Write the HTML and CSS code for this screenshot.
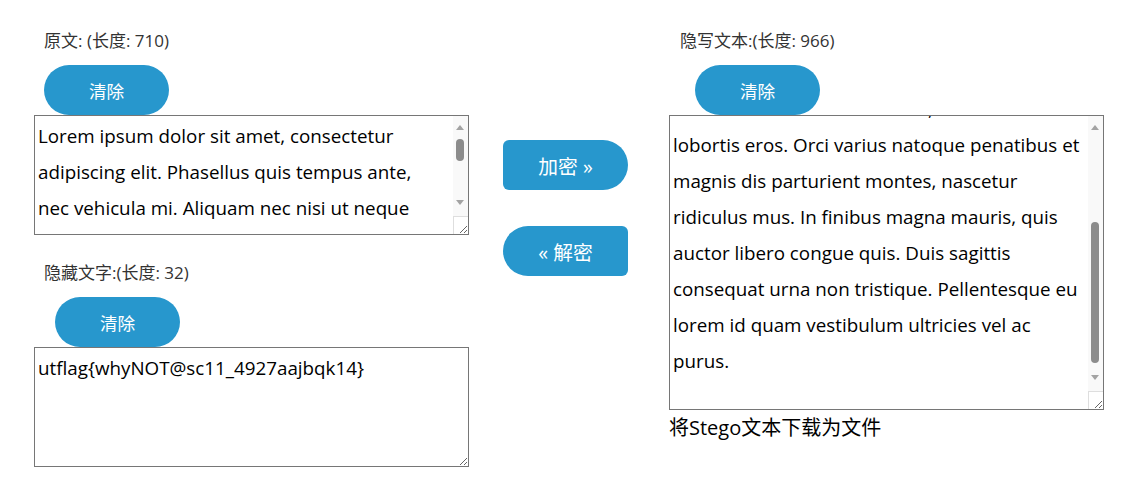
FILE: index.html
```html
<!DOCTYPE html>
<html lang="zh-CN">
<head>
<meta charset="utf-8">
<title>Stego</title>
<link rel="stylesheet" href="styles.css">
</head>
<body>
<div class="page">
  <div class="col col-left">
    <div class="label">原文: (长度: 710)</div>
    <button class="btn-clear">清除</button>
    <div class="ta-wrap">
      <textarea class="ta ta-short ta-scroll-left" id="plain">Lorem ipsum dolor sit amet, consectetur adipiscing elit. Phasellus quis tempus ante, nec vehicula mi. Aliquam nec nisi ut neque interdum ultrices. Aenean porta massa ut vehicula faucibus. Donec sit amet sem nec ipsum tincidunt aliquet. Sed vitae tristique nunc, at fermentum sapien. Nullam euismod, nisl nec accumsan ultrices, mauris libero tincidunt justo, vel posuere tortor purus in ligula. Vivamus eget pretium nunc. Curabitur ante tellus eleifend, nec mattis enim lobortis eros. Orci varius natoque penatibus et magnis dis parturient montes, nascetur ridiculus mus. In finibus magna mauris, quis auctor libero congue quis. Duis sagittis consequat urna non tristique. Pellentesque eu lorem id quam vestibulum ultricies vel ac purus.</textarea>
      <div class="sb sb-short" aria-hidden="true">
        <span class="sb-up"></span>
        <span class="sb-thumb sb-thumb-plain"></span>
        <span class="sb-down"></span>
      </div>
      <div class="sb-corner" aria-hidden="true"></div>
    </div>
    <div class="label label-second">隐藏文字:(长度: 32)</div>
    <button class="btn-clear btn-clear-second">清除</button>
    <textarea class="ta ta-short ta-plain">utflag{whyNOT@sc11_4927aajbqk14}</textarea>
  </div>
  <div class="col col-mid">
    <button class="btn-action btn-encode">加密 »</button>
    <button class="btn-action btn-decode">« 解密</button>
  </div>
  <div class="col col-right">
    <div class="label label-right">隐写文本:(长度: 966)</div>
    <button class="btn-clear btn-clear-right">清除</button>
    <div class="ta-wrap">
      <textarea class="ta ta-tall ta-scroll-right" id="stego">Lorem ipsum dolor sit amet, consectetur adipiscing elit. Phasellus quis tempus ante, nec vehicula mi. Aliquam nec nisi ut neque interdum ultrices. Aenean porta massa ut vehicula faucibus. Donec sit amet sem nec ipsum tincidunt aliquet. Sed vitae tristique nunc, at fermentum sapien. Nullam euismod, nisl nec accumsan ultrices, mauris libero tincidunt justo, vel posuere tortor purus in ligula. Vivamus eget pretium nunc.
Curabitur ante tellus eleifend, nec mattis enim
lobortis eros. Orci varius natoque penatibus et magnis dis parturient montes, nascetur ridiculus mus. In finibus magna mauris, quis auctor libero congue quis. Duis sagittis consequat urna non tristique. Pellentesque eu lorem id quam vestibulum ultricies vel ac purus.
</textarea>
      <div class="sb sb-tall" aria-hidden="true">
        <span class="sb-up"></span>
        <span class="sb-thumb sb-thumb-stego"></span>
        <span class="sb-down"></span>
      </div>
      <div class="sb-corner" aria-hidden="true"></div>
    </div>
    <div class="download">将Stego文本下载为文件</div>
  </div>
</div>
<script src="script.js"></script>
</body>
</html>
```
FILE: styles.css
```css
html, body {
  margin: 0;
  padding: 0;
  background: #ffffff;
}
body {
  font-family: "Open Sans", "Noto Sans CJK SC", sans-serif;
  color: #000;
}
.page {
  display: flex;
  align-items: flex-start;
  padding: 30px 0 0 34px;
}
.col {
  display: flex;
  flex-direction: column;
  align-items: flex-start;
}
.col-left {
  width: 435px;
}
.col-mid {
  width: 125px;
  margin-left: 34px;
  padding-top: 110px;
  gap: 36px;
}
.col-right {
  width: 435px;
  margin-left: 41px;
}
.label {
  height: 22px;
  line-height: 22px;
  font-size: 17px;
  color: #333;
  padding-left: 10px;
  margin-bottom: 13px;
  white-space: nowrap;
}
.label-second {
  margin-top: 27px;
}
.label-right {
  padding-left: 11px;
}
button {
  font-family: "Open Sans", "Noto Sans CJK SC", sans-serif;
  border: none;
  color: #fff;
  background: #2797cd;
  cursor: pointer;
  padding: 0;
}
.btn-clear {
  width: 125px;
  height: 50px;
  border-radius: 25px;
  font-size: 17.6px;
  margin-left: 10px;
}
.btn-clear-second {
  margin-left: 21px;
}
.btn-clear-right {
  margin-left: 26px;
}
.btn-action {
  width: 125px;
  height: 50px;
  font-size: 19.8px;
}
.btn-encode {
  border-radius: 6px 25px 25px 6px;
}
.btn-decode {
  border-radius: 25px 6px 6px 25px;
}
.ta-wrap {
  position: relative;
  width: 435px;
}
.ta {
  display: block;
  box-sizing: border-box;
  width: 435px;
  margin: 0;
  padding: 2px 2px 2px 3px;
  border: 1px solid #767676;
  border-radius: 0;
  font-family: "Open Sans", "Noto Sans CJK SC", sans-serif;
  font-size: 18.8px;
  line-height: 36px;
  color: #000;
  background: #fff;
  resize: both;
  overflow-y: auto;
}
.ta-scroll-left {
  padding-right: 24px;
}
.ta-scroll-right {
  padding-right: 19px;
}
.ta-short {
  height: 120px;
}
.ta-plain {
  overflow-y: hidden;
}
.ta-tall {
  height: 295px;
}

/* drawn scrollbar over the textarea edge */
.sb {
  position: absolute;
  top: 1px;
  right: 1px;
  width: 15px;
  background: #f9f9f9;
  pointer-events: none;
}
.sb-short {
  height: 100px;
}
.sb-tall {
  height: 275px;
}
.sb-up,
.sb-down,
.sb-thumb {
  position: absolute;
  display: block;
}
.sb-up {
  top: 9px;
  left: 3px;
  width: 0;
  height: 0;
  border-left: 4.5px solid transparent;
  border-right: 4.5px solid transparent;
  border-bottom: 5px solid #a3a3a3;
}
.sb-down {
  bottom: 11px;
  left: 3px;
  width: 0;
  height: 0;
  border-left: 4.5px solid transparent;
  border-right: 4.5px solid transparent;
  border-top: 5px solid #a3a3a3;
}
.sb-thumb {
  left: 3px;
  width: 8px;
  border-radius: 4px;
  background: #8c8c8c;
}
.sb-thumb-plain {
  top: 23px;
  height: 22px;
}
.sb-thumb-stego {
  top: 106px;
  height: 141px;
}
.sb-corner {
  position: absolute;
  right: 1px;
  bottom: 1px;
  width: 15px;
  height: 18px;
  box-sizing: border-box;
  border-left: 1px solid #dedede;
  border-top: 1px solid #dedede;
  pointer-events: none;
}
.download {
  font-size: 20px;
  line-height: 24px;
  margin-top: 6px;
  color: #000;
  white-space: nowrap;
}
```
FILE: script.js
```js
var stego = document.getElementById('stego');
stego.scrollTop = stego.scrollHeight - stego.clientHeight - 8;
```
